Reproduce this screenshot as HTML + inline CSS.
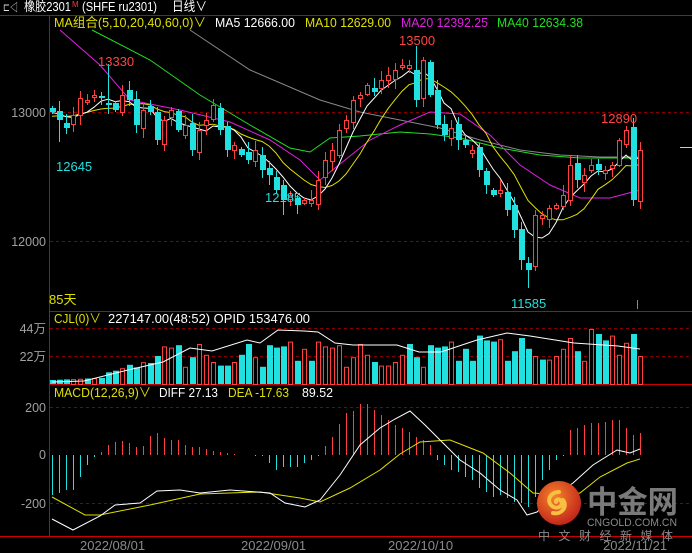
<!DOCTYPE html>
<html><head><meta charset="utf-8">
<style>
html,body{margin:0;padding:0;background:#000;width:692px;height:553px;overflow:hidden}
svg{display:block;font-family:"Liberation Sans","Noto Sans CJK SC",sans-serif}
</style></head><body>
<svg id="s" width="692" height="553" viewBox="0 0 692 553" xmlns="http://www.w3.org/2000/svg" font-size="13">
<rect width="692" height="553" fill="#000"/>
<text x="3" y="11" fill="#ddd" font-size="11" textLength="15" lengthAdjust="spacingAndGlyphs">⊏◁</text>
<text x="24" y="11" fill="#fff" textLength="47" lengthAdjust="spacingAndGlyphs">橡胶2301</text>
<text x="72" y="7" fill="#f33" font-size="8">M</text>
<text x="82" y="11" fill="#fff" textLength="75" lengthAdjust="spacingAndGlyphs">(SHFE ru2301)</text>
<text x="172" y="11" fill="#fff" textLength="35" lengthAdjust="spacingAndGlyphs">日线∨</text>
<line x1="0" y1="15.5" x2="692" y2="15.5" stroke="#c00"/>
<line x1="49.5" y1="16" x2="49.5" y2="537" stroke="#c00"/>
<line x1="49" y1="311.5" x2="692" y2="311.5" stroke="#c00"/>
<line x1="49" y1="384.5" x2="692" y2="384.5" stroke="#c00"/>
<line x1="0" y1="536.5" x2="692" y2="536.5" stroke="#c00"/>
<g stroke="#800" stroke-dasharray="3,3">
<line x1="50" y1="112.5" x2="692" y2="112.5"/>
<line x1="50" y1="241.5" x2="692" y2="241.5"/>
<line x1="50" y1="328.5" x2="692" y2="328.5"/>
<line x1="50" y1="356.5" x2="692" y2="356.5"/>
<line x1="50" y1="407.5" x2="692" y2="407.5"/>
<line x1="50" y1="503.5" x2="692" y2="503.5"/>
</g>
<g fill="#a0a0a0" text-anchor="end" font-size="12.5">
<text x="46" y="117">13000</text>
<text x="46" y="246">12000</text>
<text x="46" y="333">44万</text>
<text x="46" y="361">22万</text>
<text x="46" y="412">200</text>
<text x="46" y="459">0</text>
<text x="46" y="508">-200</text>
</g>
<g>
<text x="54" y="27" fill="#e0e000" textLength="152" lengthAdjust="spacingAndGlyphs">MA组合(5,10,20,40,60,0)∨</text>
<text x="215" y="27" fill="#fff" textLength="80" lengthAdjust="spacingAndGlyphs">MA5 12666.00</text>
<text x="305" y="27" fill="#e0e000" textLength="86" lengthAdjust="spacingAndGlyphs">MA10 12629.00</text>
<text x="401" y="27" fill="#e020e0" textLength="87" lengthAdjust="spacingAndGlyphs">MA20 12392.25</text>
<text x="497" y="27" fill="#20e020" textLength="86" lengthAdjust="spacingAndGlyphs">MA40 12634.38</text>
<text x="54" y="323" fill="#e0e000" textLength="47" lengthAdjust="spacingAndGlyphs">CJL(0)∨</text>
<text x="108" y="323" fill="#fff" textLength="202" lengthAdjust="spacingAndGlyphs">227147.00(48:52)  OPID 153476.00</text>
<text x="54" y="397" fill="#e0e000" textLength="97" lengthAdjust="spacingAndGlyphs">MACD(12,26,9)∨</text>
<text x="159" y="397" fill="#fff" textLength="59" lengthAdjust="spacingAndGlyphs">DIFF 27.13</text>
<text x="228" y="397" fill="#e0e000" textLength="61" lengthAdjust="spacingAndGlyphs">DEA -17.63</text>
<text x="302" y="397" fill="#fff" textLength="31" lengthAdjust="spacingAndGlyphs">89.52</text>
</g>
<g id="c"></g>
<g fill="#f44" font-size="13">
<text x="98" y="66">13330</text><text x="399" y="45">13500</text><text x="601" y="123">12890</text>
</g>
<g fill="#20e0e0" font-size="13">
<text x="56" y="171">12645</text><text x="265" y="202">12185</text><text x="511" y="308">11585</text>
</g>
<text x="49" y="304" fill="#e0e000">85天</text>
<line x1="680" y1="147.5" x2="692" y2="147.5" stroke="#ccc"/>
<line x1="637.5" y1="300" x2="637.5" y2="309" stroke="#888"/>
<g fill="#8a8a8a" font-size="13">
<text x="80" y="550">2022/08/01</text><text x="241" y="550">2022/09/01</text>
<text x="388" y="550">2022/10/10</text><text x="603" y="550">2022/11/21</text>
</g>
<defs><radialGradient id="g" cx="0.4" cy="0.35" r="0.7"><stop offset="0" stop-color="#f5822a"/><stop offset="1" stop-color="#c0201a"/></radialGradient></defs>
<circle cx="559" cy="503" r="22" fill="url(#g)"/>
<path d="M559 492c-9 0-13 9-7 14 5 4 12 0 9-5-2-3-6-1-5 1M563 500c5 6-1 15-10 13" stroke="#f8c040" stroke-width="4" fill="none" stroke-linecap="round"/>
<text x="587" y="513" fill="#7a7a7a" font-size="31" font-weight="bold" textLength="91" lengthAdjust="spacingAndGlyphs">中金网</text>
<text x="587" y="526" fill="#8a8a8a" font-size="11" textLength="90" lengthAdjust="spacingAndGlyphs">CNGOLD.COM.CN</text>
<text x="538" y="540" fill="#8a8a8a" font-size="12" textLength="135" lengthAdjust="spacing">中文财经新媒体</text>
</svg>
<script>
(function(){
var NS="http://www.w3.org/2000/svg",G=document.getElementById('c');
function el(t,a){var e=document.createElementNS(NS,t);for(var k in a)e.setAttribute(k,String(a[k]));G.appendChild(e);return e}
function pl(pts,c){el('polyline',{points:pts,fill:'none',stroke:c,'stroke-width':1})}
var C=[112,120,128,115,98,100,95,98,105,110,95,100,125,110,112,140,120,110,130,125,150,130,120,105,130,150,145,155,160,150,170,175,190,200,195,205,200,200,180,160,150,130,120,100,95,85,92,80,75,70,65,65,100,60,95,125,135,128,140,145,150,170,185,195,190,210,230,260,270,215,215,208,205,195,165,180,175,165,170,170,165,140,130,200,150];
function X(i){return 52+7*i}
var ext=[125,125,122,120,118,115,114,113,112,112].concat(C);
function ma(n){var p=[];for(var i=0;i<C.length;i++){var s=0;for(var j=0;j<n;j++)s+=ext[i+10-j];p.push(X(i)+','+(s/n).toFixed(1))}return p.join(' ')}
pl("190,30 250,70 320,100 360,112 400,120 440,128 480,140 520,150 560,155 600,157 640,157",'#888');
pl("92,30 150,60 200,95 250,125 290,148 310,152 330,138 360,136 400,132 430,134 460,138 500,148 540,155 580,158 640,158",'#20e020');
pl("60,30 100,65 130,100 180,110 230,122 270,140 300,160 320,180 345,160 370,140 400,125 430,112 460,114 490,135 520,165 550,185 580,198 610,198 640,190",'#e020e0');
pl(ma(10),'#e0e000');
pl(ma(5),'#fff');
for(var i=0;i<C.length;i++){
 var cl=C[i];
 var op=(i>0)?(C[i-1]+((i*37)%11-5)):108;
 if(Math.abs(op-cl)<2)op=cl+3;
 var up=cl<op,tp=Math.min(op,cl),bt=Math.max(op,cl),x=X(i);
 var hi=tp-2-((i*53)%9),lo=bt+2+((i*29)%9);
 if(i==8)hi=64;if(i==52)hi=46;if(i==82)hi=126;if(i==68)lo=288;if(i==33)lo=215;if(i==1)lo=142;
 var col=up?'#ff4040':'#20e0e0';
 el('line',{x1:x+0.5,y1:hi,x2:x+0.5,y2:lo,stroke:col});
 if(up)el('rect',{x:x-1.5,y:tp+0.5,width:4,height:bt-tp,fill:'#000',stroke:col});
 else el('rect',{x:x-2,y:tp,width:6,height:bt-tp,fill:col});
}
for(var i=0;i<C.length;i++){
 var hv=((i*i*13+i*7+5)%23);
 var h=i<8?4+i*0.3:(i<16?6+(i-8)*2.2+hv*0.3:Math.min(52,16+hv*1.2+(i>60?6:0)));
 if(i==77)h=55;if(i==78)h=50;if(i==83)h=50;if(i==84)h=28;
 var up=i>0&&C[i]<C[i-1],col=up?'#ff4040':'#20e0e0',x=X(i);
 if(up)el('rect',{x:x-1.5,y:384.5-h,width:4,height:h,fill:'#000',stroke:col});
 else el('rect',{x:x-2,y:384-h,width:6,height:h,fill:col});
}
pl("52,382 84,381 128,370 163,362 190,348 212,351 247,340 260,343 278,330 304,331 318,332 335,343 353,345 397,345 419,352 441,352 477,340 507,333 530,336 574,343 618,346 640,349",'#fff');
var H=[495,493,490,490,477,465,457,452,445,442,441,443,447,446,436,433,438,440,440,445,447,447,449,451,452,453,454,455,455,456,456,463,470,467,467,467,463,460,456,446,437,424,413,411,404,404,410,415,420,425,428,432,437,440,445,460,465,470,472,477,480,488,492,497,495,498,502,503,507,497,480,470,460,456,430,428,425,423,423,422,420,420,428,435,433];
for(var i=0;i<H.length;i++){var x=X(i)+0.5;if(H[i]!=455)el('line',{x1:x,y1:455,x2:x,y2:H[i],stroke:H[i]<455?'#ff4040':'#20e0e0'})}
pl("52,497 85,515 100,515 150,505 200,494 260,492 300,498 320,502 350,488 380,470 400,454 420,442 450,440 483,453 510,473 533,493 560,495 580,493 600,477 627,463 640,459",'#e0e000');
pl("52,519 73,530 100,516 115,505 140,503 157,491 180,490 200,493 230,490 270,493 285,503 305,507 320,500 340,475 360,445 380,428 395,419 410,411 425,425 440,440 460,460 480,473 500,490 517,500 527,515 537,512 555,495 573,483 593,465 617,450 630,453 640,449",'#fff');
})();
</script>
</body></html>
